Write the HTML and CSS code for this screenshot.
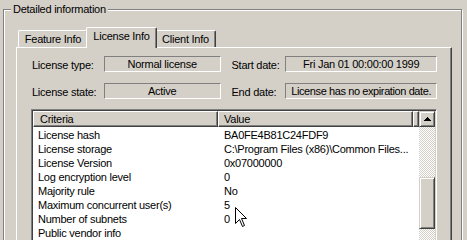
FILE: index.html
```html
<!DOCTYPE html>
<html>
	<head>
		<meta charset="UTF-8">
		<title>Detailed information</title>
		<link rel="stylesheet" href="styles.css">
	</head>
	<body>
		<div class="group">
			<span class="caption">Detailed information</span>
			<div class="tabs">
				<div class="tab tab_feature">Feature Info</div>
				<div class="tab tab_license active_tab">License Info</div>
				<div class="tab tab_client">Client Info</div>
			</div>
			<div class="panel">
				<div class="field_row">
					<span class="label">License type:</span>
					<span class="box box_short">Normal license</span>
					<span class="label label_right">Start date:</span>
					<span class="box box_long">Fri Jan 01 00:00:00 1999</span>
				</div>
				<div class="field_row row_two">
					<span class="label">License state:</span>
					<span class="box box_short">Active</span>
					<span class="label label_right">End date:</span>
					<span class="box box_long box_tight">License has no expiration date.</span>
				</div>
				<div class="list">
					<div class="list_main">
						<div class="list_head">
							<span class="head_cell col_a">Criteria</span>
							<span class="head_cell col_b">Value</span>
							<span class="head_cell head_fill"></span>
						</div>
						<div class="list_row"><span class="col_a">License hash</span><span class="col_b">BA0FE4B81C24FDF9</span></div>
						<div class="list_row"><span class="col_a">License storage</span><span class="col_b">C:\Program Files (x86)\Common Files...</span></div>
						<div class="list_row"><span class="col_a">License Version</span><span class="col_b">0x07000000</span></div>
						<div class="list_row"><span class="col_a">Log encryption level</span><span class="col_b">0</span></div>
						<div class="list_row"><span class="col_a">Majority rule</span><span class="col_b">No</span></div>
						<div class="list_row"><span class="col_a">Maximum concurrent user(s)</span><span class="col_b">5</span></div>
						<div class="list_row"><span class="col_a">Number of subnets</span><span class="col_b">0</span></div>
						<div class="list_row"><span class="col_a">Public vendor info</span><span class="col_b"></span></div>
					</div>
					<div class="scroll">
						<div class="scroll_btn">
							<svg width="7" height="4" viewBox="0 0 7 4"><path d="M3 0h1v1h1v1h1v1h1v1H0V3h1V2h1V1h1z" fill="#000"/></svg>
						</div>
						<div class="track track_top"></div>
						<div class="thumb"></div>
						<div class="track"></div>
					</div>
				</div>
			</div>
		</div>
		<svg class="pointer" width="13" height="21" viewBox="0 0 13 21">
			<path d="M0.5 0.5V16.5L4.5 12.5L7.5 19.5L9.5 18.5L6.5 11.5H11.5Z" fill="#fff" stroke="#000" stroke-width="1" stroke-linejoin="miter"/>
		</svg>
	</body>
</html>
```

FILE: styles.css
```css
html,body{margin: 0; padding: 0;}
body{
	width: 467px;
	height: 240px;
	overflow: hidden;
	background: #d4d0c8;
	font-family: "Liberation Sans", Arial, sans-serif;
	font-size: 11px;
	letter-spacing: -0.25px;
	color: #000;
	position: relative;
}
.group{
	position: relative;
	margin: 9px 5px 0 3px;
	height: 260px;
	border: 1px solid #808080;
	box-shadow: inset 1px 1px 0 #fff, 1px 1px 0 #fff;
}
.caption{
	position: absolute;
	top: -7px;
	left: 7px;
	padding: 0 2px;
	line-height: 13px;
	background: #d4d0c8;
}
.tabs{
	display: flex;
	align-items: flex-end;
	margin: 0 9px -1px 12px;
	padding: 17px 0 0 2px;
}
.tab{
	box-sizing: border-box;
	height: 17px;
	margin-bottom: 1px;
	line-height: 16px;
	text-align: center;
	border-top: 1px solid #fff;
	border-left: 1px solid #fff;
	border-right: 1px solid #404040;
	box-shadow: inset -1px 0 0 #808080;
	border-radius: 2px 2px 0 0;
	background: #d4d0c8;
}
.tab_feature{width: 70px;}
.tab_license{width: 67px;}
.tab_client{width: 61px;}
.active_tab{
	position: relative;
	z-index: 2;
	width: 71px;
	height: 21px;
	margin: 0 -2px;
	line-height: 17px;
}
.panel{
	margin: 0 9px 0 12px;
	height: 200px;
	padding: 8px 14px 0 14px;
	border-top: 1px solid #fff;
	border-left: 1px solid #fff;
	border-right: 1px solid #404040;
	box-shadow: inset -1px 0 0 #808080;
}
.field_row{
	display: flex;
	align-items: center;
	height: 16px;
}
.row_two{margin-top: 11px;}
.label{
	width: 72px;
	padding: 3px 0 0 1px;
	line-height: 13px;
	white-space: nowrap;
}
.label_right{
	width: 54px;
	margin-left: 10px;
}
.box{
	box-sizing: border-box;
	height: 16px;
	line-height: 14px;
	text-align: center;
	white-space: nowrap;
	overflow: hidden;
	border-top: 1px solid #808080;
	border-left: 1px solid #808080;
	border-right: 1px solid #fff;
	border-bottom: 1px solid #fff;
}
.box_short{width: 117px;}
.box_long{width: 152px;}
.box_tight{letter-spacing: -0.4px;}
.list{
	display: flex;
	margin-top: 10px;
	height: 140px;
	background: #fff;
	border-top: 1px solid #808080;
	border-left: 1px solid #808080;
	border-right: 1px solid #fff;
	border-bottom: 1px solid #fff;
	box-shadow: inset 1px 1px 0 #404040, inset -1px -1px 0 #d4d0c8;
	padding: 1px;
}
.list_main{flex: 1;}
.list_head{
	display: flex;
	height: 16px;
}
.head_cell{
	box-sizing: border-box;
	height: 16px;
	line-height: 15px;
	background: #d4d0c8;
	border-top: 1px solid #fff;
	border-left: 1px solid #fff;
	border-right: 1px solid #404040;
	border-bottom: 1px solid #404040;
	box-shadow: inset -1px -1px 0 #808080;
}
.list_head .col_a{padding-left: 6px;}
.list_head .col_b{padding-left: 5px;}
.head_fill{flex: 1;}
.col_a{
	box-sizing: border-box;
	width: 185px;
	padding-left: 5px;
	white-space: nowrap;
}
.col_b{
	box-sizing: border-box;
	width: 195px;
	padding-left: 6px;
	white-space: nowrap;
}
.list_row{
	display: flex;
	height: 14px;
	line-height: 16px;
}
.scroll{
	width: 16px;
	display: flex;
	flex-direction: column;
}
.scroll_btn,.thumb{
	box-sizing: border-box;
	background: #d4d0c8;
	border-top: 1px solid #d4d0c8;
	border-left: 1px solid #d4d0c8;
	border-right: 1px solid #404040;
	border-bottom: 1px solid #404040;
	box-shadow: inset 1px 1px 0 #fff, inset -1px -1px 0 #808080;
}
.scroll_btn{
	height: 16px;
	display: flex;
	align-items: center;
	justify-content: center;
}
.scroll_btn svg{display: block; margin-top: -1px;}
.track{
	flex: 1;
	background: repeating-conic-gradient(#fff 0 25%, #d4d0c8 0 50%) 0 0/2px 2px;
}
.track_top{flex: none; height: 50px;}
.thumb{height: 52px;}
.pointer{
	position: absolute;
	left: 235px;
	top: 207px;
}
```
